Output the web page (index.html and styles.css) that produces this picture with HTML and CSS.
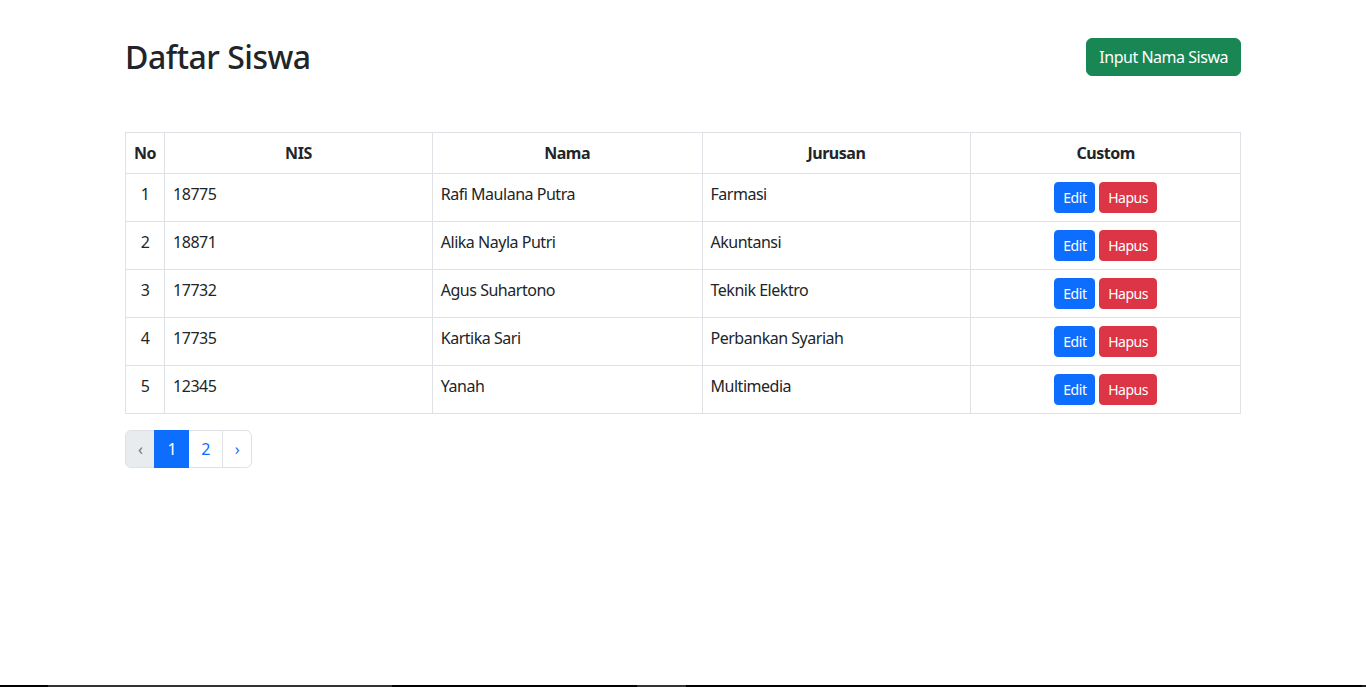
FILE: index.html
```html
<!DOCTYPE html>
<html lang="id">
<head>
<meta charset="utf-8">
<title>Daftar Siswa</title>
<link rel="stylesheet" href="styles.css">
</head>
<body>
<div class="container">
  <div class="page-head">
    <h2 class="title">Daftar Siswa</h2>
    <a class="btn btn-success" href="#">Input Nama Siswa</a>
  </div>

  <table class="table">
    <thead>
      <tr>
        <th class="c-no">No</th>
        <th class="c-nis">NIS</th>
        <th class="c-nama">Nama</th>
        <th class="c-jur">Jurusan</th>
        <th class="c-cus">Custom</th>
      </tr>
    </thead>
    <tbody>
      <tr>
        <td class="center">1</td><td>18775</td><td>Rafi Maulana Putra</td><td>Farmasi</td>
        <td class="center"><a class="btn btn-sm btn-primary" href="#">Edit</a> <a class="btn btn-sm btn-danger" href="#">Hapus</a></td>
      </tr>
      <tr>
        <td class="center">2</td><td>18871</td><td>Alika Nayla Putri</td><td>Akuntansi</td>
        <td class="center"><a class="btn btn-sm btn-primary" href="#">Edit</a> <a class="btn btn-sm btn-danger" href="#">Hapus</a></td>
      </tr>
      <tr>
        <td class="center">3</td><td>17732</td><td>Agus Suhartono</td><td>Teknik Elektro</td>
        <td class="center"><a class="btn btn-sm btn-primary" href="#">Edit</a> <a class="btn btn-sm btn-danger" href="#">Hapus</a></td>
      </tr>
      <tr>
        <td class="center">4</td><td>17735</td><td>Kartika Sari</td><td>Perbankan Syariah</td>
        <td class="center"><a class="btn btn-sm btn-primary" href="#">Edit</a> <a class="btn btn-sm btn-danger" href="#">Hapus</a></td>
      </tr>
      <tr>
        <td class="center">5</td><td>12345</td><td>Yanah</td><td>Multimedia</td>
        <td class="center"><a class="btn btn-sm btn-primary" href="#">Edit</a> <a class="btn btn-sm btn-danger" href="#">Hapus</a></td>
      </tr>
    </tbody>
  </table>

  <ul class="pagination">
    <li class="page-item disabled"><span class="page-link">&lsaquo;</span></li>
    <li class="page-item active"><span class="page-link">1</span></li>
    <li class="page-item"><a class="page-link" href="#">2</a></li>
    <li class="page-item"><a class="page-link" href="#">&rsaquo;</a></li>
  </ul>
</div>
<div class="bottom-strip">
  <span class="seg s1"></span><span class="seg s2"></span><span class="seg s3"></span>
</div>
</body>
</html>
```

FILE: styles.css
```css
* { box-sizing: border-box; }
html, body { margin: 0; padding: 0; background: #fff; }
body {
  font-family: "Noto Sans", "Open Sans", "Liberation Sans", sans-serif;
  font-size: 16px;
  line-height: 1.5;
  color: #212529;
  letter-spacing: -0.03em;
}
.container {
  width: 1140px;
  margin: 0 auto;
  padding: 38px 12px 0;
}
.page-head {
  display: flex;
  justify-content: space-between;
  align-items: center;
  margin-bottom: 56px;
}
.title {
  margin: 0;
  font-size: 32px;
  font-weight: 500;
  line-height: 38px;
}
.btn {
  display: inline-block;
  text-decoration: none;
  color: #fff;
  border: 1px solid transparent;
  font-size: 16px;
  line-height: 24px;
  padding: 6px 12px;
  border-radius: 6px;
  vertical-align: middle;
}
.btn-success { background: #198754; border-color: #198754; }
.btn-primary { background: #0d6efd; border-color: #0d6efd; }
.btn-danger { background: #dc3545; border-color: #dc3545; }
.btn-sm {
  font-size: 14px;
  line-height: 21px;
  padding: 4px 8px;
  border-radius: 4px;
}
.table {
  width: 100%;
  border-collapse: collapse;
  margin-bottom: 16px;
  vertical-align: top;
}
.table th, .table td {
  border: 1px solid #dee2e6;
  padding: 8px;
  text-align: left;
  vertical-align: top;
}
.table th {
  font-weight: 700;
  text-align: center;
  vertical-align: bottom;
}
.table td.center { text-align: center; }
.c-no { width: 39px; }
.c-nis { width: 268px; }
.c-nama { width: 270px; }
.c-jur { width: 269px; }
.c-cus { width: 270px; }

.pagination {
  display: flex;
  list-style: none;
  margin: 0;
  padding: 0;
}
.page-link {
  display: block;
  padding: 6px 12px;
  font-size: 16px;
  line-height: 24px;
  color: #0d6efd;
  text-decoration: none;
  background: #fff;
  border: 1px solid #dee2e6;
}
.page-item + .page-item .page-link { margin-left: -1px; }
.page-item:first-child .page-link { border-radius: 6px 0 0 6px; }
.page-item:last-child .page-link { border-radius: 0 6px 6px 0; }
.page-item.disabled .page-link { color: #6c757d; background: #e9ecef; }
.page-item.active .page-link {
  color: #fff;
  background: #0d6efd;
  border-color: #0d6efd;
  position: relative;
}

.bottom-strip {
  position: fixed;
  left: 0;
  right: 0;
  bottom: 0;
  height: 2px;
  background: #000;
}
.seg { position: absolute; top: 0; height: 2px; background: #333; }
.s1 { left: 48px; width: 344px; }
.s2 { left: 637px; width: 49px; }
.s3 { left: 1362px; width: 4px; background: #222; }
```
